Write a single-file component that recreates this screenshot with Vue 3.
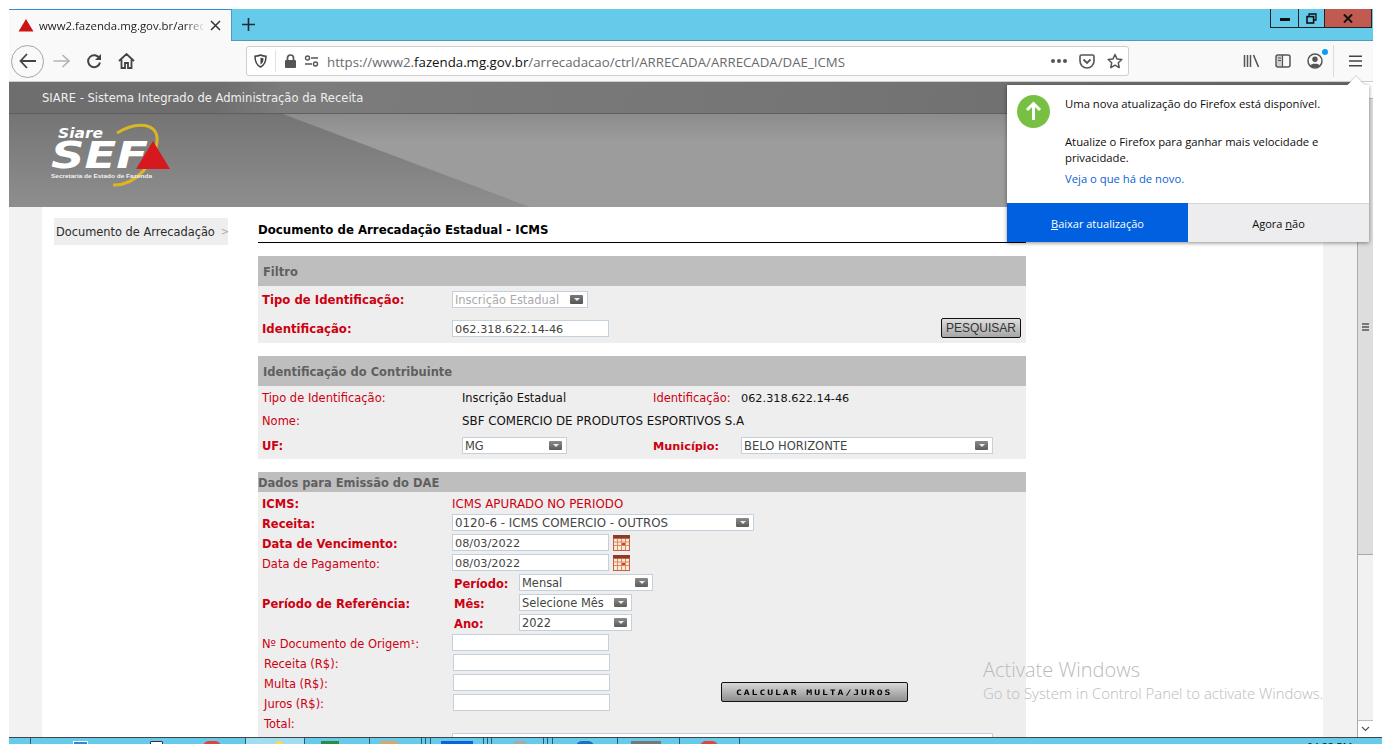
<script setup>
const taskIcons = [
  { x: 73, w: 15, c: '#2d89d6', b: '#fff', r: 0 },
  { x: 150, w: 13, c: '#fff', b: '#333', r: 1 },
  { x: 202, w: 20, c: '#e0453a', b: '#e0453a', r: 10 },
  { x: 274, w: 10, c: '#f6df4a', b: '#f6df4a', r: 5 },
  { x: 321, w: 18, c: '#2f8a43', b: '#2f8a43', r: 0 },
  { x: 380, w: 18, c: '#d8a868', b: '#d8a868', r: 2 },
  { x: 441, w: 32, c: '#0a63d8', b: '#0a63d8', r: 0 },
  { x: 514, w: 12, c: '#a8a8a8', b: '#a8a8a8', r: 0 },
  { x: 575, w: 20, c: '#1f6fc0', b: '#1f6fc0', r: 10 },
  { x: 631, w: 30, c: '#777', b: '#777', r: 0 },
  { x: 699, w: 20, c: '#e0453a', b: '#e0453a', r: 10 },
]
const taskLines = [30, 245, 304, 369, 421, 425, 430, 483, 487, 491, 543, 547, 552, 617, 679, 739]
</script>

<template>
  <div class="screen">
    <div class="window">
      <div class="tabbar">
        <div class="tab">
          <svg class="fav" width="16" height="14" viewBox="0 0 16 14"><path d="M8 1 15.500 13.500H.5Z" fill="#cc1414"/></svg>
          <span class="tab-title">www2.fazenda.mg.gov.br/arrecadacao</span>
          <svg class="tab-x" width="11" height="11" viewBox="0 0 11 11"><path d="M1 1l9 9M10 1l-9 9" stroke="#333" stroke-width="1.500"/></svg>
        </div>
        <svg class="plus" width="15" height="15" viewBox="0 0 15 15"><path d="M7.500 1v13M1 7.500h13" stroke="#1f2a33" stroke-width="1.600"/></svg>
        <div class="winbtns">
          <div class="wb wb-min"><i></i></div>
          <div class="wb wb-max">
            <svg width="11" height="11" viewBox="0 0 11 11"><path d="M3 3V1h7v6H8" fill="none" stroke="#111" stroke-width="1.300"/><rect x="1" y="3.600" width="6.600" height="6.400" fill="none" stroke="#111" stroke-width="1.600"/></svg>
          </div>
          <div class="wb wb-close">
            <svg width="10" height="9" viewBox="0 0 10 9"><path d="M1 .5l8 8M9 .5l-8 8" stroke="#111" stroke-width="2"/></svg>
          </div>
        </div>
      </div>

      <div class="toolbar">
        <div class="navs">
          <div class="back">
            <svg width="18" height="16" viewBox="0 0 18 16"><path d="M8 1 1.500 8 8 15M2 8h15" fill="none" stroke="#444" stroke-width="1.800"/></svg>
          </div>
          <svg class="fwd" width="17" height="14" viewBox="0 0 17 14"><path d="M9.500 1 16 7l-6.500 6M15.500 7H0.500" fill="none" stroke="#b4b4b6" stroke-width="1.700"/></svg>
          <svg class="reload" width="16" height="16" viewBox="0 0 16 16"><path d="M13.500 5.500A6 6 0 1 0 14 9.500" fill="none" stroke="#444" stroke-width="2"/><path d="M15 1v6H9Z" fill="#444"/></svg>
          <svg class="home" width="17" height="16" viewBox="0 0 17 16"><path d="M1 8 8.500 1 16 8M3.500 6.500V15h3.500v-5h3v5h3.500V6.500" fill="none" stroke="#444" stroke-width="1.800"/></svg>
        </div>
        <div class="urlbar">
          <svg class="shield" width="13" height="14" viewBox="0 0 13 14"><path d="M6.500 1C4.500 2 3 2.200 1 2.200 1 8 2.500 11 6.500 13 10.500 11 12 8 12 2.200 10 2.200 8.500 2 6.500 1Z" fill="none" stroke="#444" stroke-width="1.500"/><path d="M6.500 3.500v7C8.500 9.500 9.500 8 9.500 4.300 8.400 4.300 7.500 4 6.500 3.500Z" fill="#444"/></svg>
          <span class="sep"></span>
          <svg class="lock" width="13" height="14" viewBox="0 0 13 14"><path d="M3.500 6V4a3 3 0 0 1 6 0v2" fill="none" stroke="#555" stroke-width="1.700"/><rect x="1" y="6" width="11" height="8" rx="1" fill="#555"/></svg>
          <svg class="perm" width="15" height="12" viewBox="0 0 15 12"><circle cx="3.500" cy="3" r="2" fill="none" stroke="#555" stroke-width="1.400"/><path d="M7 3h7M1 9h7" stroke="#555" stroke-width="1.600"/><circle cx="11.500" cy="9" r="2" fill="none" stroke="#555" stroke-width="1.400"/></svg>
          <span class="url">https://www2.<b>fazenda.mg.gov.br</b>/arrecadacao/ctrl/ARRECADA/ARRECADA/DAE_ICMS</span>
          <span class="dots"><i></i><i></i><i></i></span>
          <svg class="pocket" width="16" height="15" viewBox="0 0 16 15"><path d="M1 2.500A1.500 1.500 0 0 1 2.500 1h11A1.500 1.500 0 0 1 15 2.500V7a7 7 0 0 1-14 0Z" fill="none" stroke="#555" stroke-width="1.600"/><path d="M4.500 5.500 8 9l3.500-3.500" fill="none" stroke="#555" stroke-width="1.800"/></svg>
          <svg class="star" width="16" height="16" viewBox="0 0 16 16"><path d="M8 1.500l2 4.400 4.800.6-3.500 3.300.9 4.800L8 12.200l-4.200 2.400.9-4.800L1.200 6.500 6 5.900Z" fill="none" stroke="#555" stroke-width="1.500" stroke-linejoin="round"/></svg>
        </div>
        <div class="tools">
          <svg width="17" height="14" viewBox="0 0 17 14"><path d="M1.500 1v12M4.500 1v12M7.500 1v12" stroke="#555" stroke-width="1.500"/><path d="M10.500 1l5 12" stroke="#555" stroke-width="1.600"/></svg>
          <svg class="t-side" width="16" height="14" viewBox="0 0 16 14"><rect x="1" y="1" width="14" height="12" rx="2" fill="none" stroke="#555" stroke-width="1.500"/><rect x="2" y="2" width="5" height="10" fill="#555" opacity=".25"/><path d="M7.500 1v12M3 4h3M3 6.500h3" stroke="#555" stroke-width="1.200"/></svg>
          <div class="acct">
            <svg width="16" height="16" viewBox="0 0 16 16"><circle cx="8" cy="8" r="7" fill="none" stroke="#555" stroke-width="1.500"/><circle cx="8" cy="6.300" r="2.700" fill="#555"/><path d="M3 12.500C4.500 10 11.500 10 13 12.500 11 15 5 15 3 12.500Z" fill="#555"/></svg>
            <i></i>
          </div>
          <span class="t-sep"></span>
          <svg class="burger" width="13" height="12" viewBox="0 0 13 12"><path d="M0 1.200h13M0 6h13M0 10.800h13" stroke="#444" stroke-width="1.600"/></svg>
        </div>
      </div>

      <div class="viewport">
        <div class="page">
          <header class="hero">
            <div class="hero-band"></div>
            <div class="hero-title">SIARE - Sistema Integrado de Administração da Receita</div>
            <svg class="logo" width="122" height="66" viewBox="0 0 122 66">
              <path d="M66 9C85 -3 108 -2 106 18 104 38 85 62 62 61" fill="none" stroke="#dcb524" stroke-width="3"/>
              <text x="7" y="13.500" class="lg-siare" textLength="45" lengthAdjust="spacingAndGlyphs">Siare</text>
              <text x="0" y="44" class="lg-sef" textLength="97" lengthAdjust="spacingAndGlyphs">SEF</text>
              <path d="M102 17 119 45H85Z" fill="#d8181f"/>
              <text x="0" y="54" class="lg-sub" textLength="101" lengthAdjust="spacingAndGlyphs">Secretaria de Estado de Fazenda</text>
            </svg>
          </header>

          <div class="sheet">
            <aside class="side">
              <div class="side-item"><span>Documento de Arrecadação</span><em>&gt;</em></div>
            </aside>
            <main class="main">
              <h1 class="title">Documento de Arrecadação Estadual - ICMS</h1>

              <section class="panel p-filter">
                <h2>Filtro</h2>
                <div class="body">
                  <div class="row r1"><label class="b">Tipo de Identificação:</label><div class="sel dis w136"><span>Inscrição Estadual</span><i></i></div></div>
                  <div class="row r2"><label class="b">Identificação:</label><div class="inp">062.318.622.14-46</div><button class="pesq">PESQUISAR</button></div>
                </div>
              </section>

              <section class="panel p-contrib">
                <h2>Identificação do Contribuinte</h2>
                <div class="body">
                  <div class="row c1"><label>Tipo de Identificação:</label><span class="val v191">Inscrição Estadual</span><label class="l88">Identificação:</label><span class="val num">062.318.622.14-46</span></div>
                  <div class="row c2"><label>Nome:</label><span class="val up">SBF COMERCIO DE PRODUTOS ESPORTIVOS S.A</span></div>
                  <div class="row c3"><label class="b">UF:</label><div class="sel w105"><span>MG</span><i></i></div><label class="b l88 mun">Município:</label><div class="sel w252"><span class="up2">BELO HORIZONTE</span><i></i></div></div>
                </div>
              </section>

              <section class="panel p-dados">
                <h2>Dados para Emissão do DAE</h2>
                <div class="body">
                  <div class="drow"><label class="b">ICMS:</label><span class="red up">ICMS APURADO NO PERIODO</span></div>
                  <div class="drow"><label class="b">Receita:</label><div class="sel w302"><span class="up">0120-6 - ICMS COMERCIO - OUTROS</span><i></i></div></div>
                  <div class="drow"><label class="b">Data de Vencimento:</label><div class="inp">08/03/2022</div><svg class="cal" width="17" height="16" viewBox="0 0 17 16"><rect x="0" y="0" width="17" height="4" fill="#8a3a2c"/><rect x=".5" y="3.500" width="16" height="12" fill="#f8e8d8" stroke="#c9603c"/><path d="M1 7h15M1 10.500h15M4.500 4v11M8.500 4v11M12.500 4v11" stroke="#d98a66"/><rect x="9" y="8" width="3" height="2" fill="#d3402a"/></svg></div>
                  <div class="drow"><label>Data de Pagamento:</label><div class="inp">08/03/2022</div><svg class="cal" width="17" height="16" viewBox="0 0 17 16"><rect x="0" y="0" width="17" height="4" fill="#8a3a2c"/><rect x=".5" y="3.500" width="16" height="12" fill="#f8e8d8" stroke="#c9603c"/><path d="M1 7h15M1 10.500h15M4.500 4v11M8.500 4v11M12.500 4v11" stroke="#d98a66"/><rect x="9" y="8" width="3" height="2" fill="#d3402a"/></svg></div>
                  <div class="period">
                    <label class="b">Período de Referência:</label>
                    <div class="sub">
                      <div class="srow"><label class="b">Período:</label><div class="sel w134"><span>Mensal</span><i></i></div></div>
                      <div class="srow"><label class="b">Mês:</label><div class="sel w113"><span>Selecione Mês</span><i></i></div></div>
                      <div class="srow"><label class="b">Ano:</label><div class="sel w113"><span>2022</span><i></i></div></div>
                    </div>
                  </div>
                  <div class="drow"><label>Nº Documento de Origem¹:</label><div class="inp"></div></div>
                  <div class="calc-wrap">
                    <div class="drow ind"><label>Receita (R$):</label><div class="inp"></div></div>
                    <div class="drow ind"><label>Multa (R$):</label><div class="inp"></div></div>
                    <div class="drow ind"><label>Juros (R$):</label><div class="inp"></div></div>
                    <button class="calc"><span>CALCULAR MULTA/JUROS</span></button>
                  </div>
                  <div class="drow ind"><label>Total:</label></div>
                  <div class="last-box"></div>
                </div>
              </section>
            </main>
          </div>
        </div>
        <div class="scrollbar">
          <div class="sb-btn sb-up"></div>
          <div class="sb-track">
            <div class="sb-thumb"><i></i><i></i><i></i></div>
          </div>
          <div class="sb-btn"><svg width="9" height="6" viewBox="0 0 9 6"><path d="M1 1l3.500 3.500L8 1" fill="none" stroke="#555" stroke-width="1.200"/></svg></div>
        </div>

        <div class="activate">
          <div class="a1">Activate Windows</div>
          <div class="a2">Go to System in Control Panel to activate Windows.</div>
        </div>
      </div>

      <div class="popup">
        <span class="pop-arrow"></span>
        <div class="pop-body">
          <svg class="pop-ic" width="33" height="33" viewBox="0 0 33 33"><circle cx="16.500" cy="16.500" r="16.500" fill="#77c043"/><path d="M16.500 25V9M10 15l6.500-6.500L23 15" fill="none" stroke="#fff" stroke-width="3"/></svg>
          <div class="pop-text">
            <p class="p1">Uma nova atualização do Firefox está disponível.</p>
            <p class="p2">Atualize o Firefox para ganhar mais velocidade e privacidade.</p>
            <p class="p3">Veja o que há de novo.</p>
          </div>
        </div>
        <div class="pop-btns">
          <div class="pb primary"><span><u>B</u>aixar atualização</span></div>
          <div class="pb second"><span>Agora <u>n</u>ão</span></div>
        </div>
      </div>
    </div>

    <div class="taskbar">
      <span class="tb-active"></span>
      <span v-for="l in taskLines" :key="l" class="tb-line" :style="{ left: l + 'px' }"></span>
      <span v-for="t in taskIcons" :key="t.x" class="tb-ic" :style="{ left: t.x + 'px', width: t.w + 'px', background: t.c, borderColor: t.b, borderRadius: t.r + 'px' }"></span>
      <span class="clock">04:22 PM</span>
    </div>
  </div>
</template>

<style>
html, body { margin: 0; overflow: hidden; background: #fff; }
</style>

<style scoped>
.screen { width: 1382px; height: 744px; overflow: hidden; position: relative; background: #fff; display: flex; flex-direction: column; padding: 9px 9px 0 9px; box-sizing: border-box; font-family: "DejaVu Sans", Verdana, sans-serif; }
.window { width: 1364px; height: 728px; position: relative; display: flex; flex-direction: column; flex: none; }

/* tabs */
.tabbar { height: 32px; background: #66cbea; display: flex; align-items: center; position: relative; border-bottom: 1px solid #4a9db8; box-sizing: border-box; flex: none; }
.tab { width: 223px; height: 32px; box-sizing: border-box; background: #f9f9fa; border-top: 1px solid #2a8fe0; border-right: 1px solid #4a9db8; display: flex; align-items: center; padding: 0 10px 0 9px; font-family: "Open Sans", sans-serif; font-size: 11.400px; color: #222; flex: none; }
.tab-title { width: 166px; margin-left: 5px; overflow: hidden; white-space: nowrap; -webkit-mask-image: linear-gradient(90deg, #000 88%, transparent); mask-image: linear-gradient(90deg, #000 88%, transparent); }
.tab-x { margin-left: 5px; }
.plus { margin-left: 9px; }
.winbtns { margin-left: auto; margin-right: 1px; display: flex; align-self: flex-start; border: 1px solid #222; border-top: none; height: 18px; }
.wb { display: flex; align-items: center; justify-content: center; height: 100%; }
.wb-min { width: 27px; border-right: 1px solid #222; }
.wb-min i { display: block; width: 10px; height: 3px; background: #111; margin-top: 3px; }
.wb-max { width: 25px; }
.wb-close { width: 46px; background: #c15a50; border-left: 1px solid #222; }

/* toolbar */
.toolbar { height: 41px; background: #f9f9fa; display: flex; align-items: center; flex: none; border-bottom: 1px solid #cfcfd0; box-sizing: border-box; }
.navs { width: 237px; display: flex; align-items: center; flex: none; padding-left: 2px; box-sizing: border-box; }
.back { width: 33px; height: 33px; border: 1px solid #a5a5a5; border-radius: 50%; display: flex; align-items: center; justify-content: center; box-sizing: border-box; margin-right: 9px; }
.fwd { margin-right: 16px; }
.reload { margin-right: 16px; }
.urlbar { width: 883px; height: 30px; box-sizing: border-box; border: 1px solid #cfcfd1; border-radius: 3px; background: #fff; display: flex; align-items: center; padding-left: 7px; flex: none; }
.sep { width: 1px; height: 22px; background: #e2e2e3; margin: 0 8px; }
.perm { margin-left: 7px; }
.url { margin-left: 8px; font-family: "Open Sans", sans-serif; font-size: 13.250px; color: #6a6a6d; white-space: nowrap; width: 724px; padding-top: 1px; }
.url b { font-weight: 400; color: #111; }
.dots { display: flex; gap: 2px; width: 17px; }
.dots i { width: 4px; height: 4px; border-radius: 50%; background: #555; }
.pocket { margin-left: 11px; }
.star { margin-left: 12px; }
.tools { display: flex; align-items: center; margin-left: 114px; flex: none; position: relative; }
.t-side { margin-left: 15px; }
.acct { margin-left: 16px; position: relative; display: flex; }
.acct i { position: absolute; top: -4px; right: -5px; width: 6px; height: 6px; border-radius: 50%; background: #0a9cf5; }
.t-sep { width: 1px; height: 32px; background: #dcdcdd; margin-left: 10px; }
.burger { margin-left: 15px; }

/* page */
.viewport { flex: 1; position: relative; display: flex; overflow: hidden; min-height: 0; }
.page { width: 1348px; background: #f2f2f2; flex: none; }
.hero { height: 125px; position: relative; background: linear-gradient(180deg, #727272 0, #727272 26%, #757575 27%, #8e8e8e 100%); overflow: hidden; }
.hero::before { content: ""; position: absolute; left: 274px; top: 32px; width: 1074px; height: 93px; background: linear-gradient(180deg, #8c8c8c 0, #9c9c9c 30%, #9c9c9c 100%); clip-path: polygon(0 0, 100% 0, 100% 100%, 23% 100%); }
.hero-band { position: absolute; left: 0; top: 0; right: 0; height: 32px; box-sizing: border-box; border-bottom: 1px solid #5f5f5f; background: linear-gradient(100deg, #6e6e6e 0, #6e6e6e 15.500%, #7c7c7c 20.500%, #757575 60%, #696969 100%); }
.hero-title { position: relative; z-index: 1; padding: 9px 0 0 33px; font-size: 11.570px; line-height: 14px; color: #eee; }
.logo { position: absolute; z-index: 1; left: 42px; top: 42px; overflow: visible; }
.lg-siare { font: italic 900 14px "DejaVu Sans", sans-serif; fill: #fff; }
.lg-sef { font: italic 700 38px "DejaVu Sans", sans-serif; fill: #fff; }
.lg-sub { font: 700 6px "Liberation Sans", sans-serif; fill: #f1f1f1; }

.sheet { margin: 0 34px 0 33px; background: #fff; display: flex; height: 600px; }
.side { width: 216px; padding: 11px 0 0 12px; box-sizing: border-box; flex: none; }
.side-item { width: 174px; height: 27px; background: #eee; display: flex; align-items: center; padding-left: 2px; box-sizing: border-box; font-size: 11.400px; color: #2b2b2b; white-space: nowrap; }
.side-item em { font-style: normal; color: #aaa; margin-left: 6px; font-size: 10px; }
.main { width: 768px; padding-top: 15px; flex: none; }
.title { margin: 0 0 13px; font-size: 11.750px; line-height: 17px; height: 20px; font-weight: 700; color: #000; border-bottom: 1px solid #000; box-sizing: content-box; white-space: nowrap; }
.panel { margin-bottom: 13px; background: #eee; }
.panel h2 { margin: 0; height: 30px; line-height: 33px; padding-left: 5px; background: #bebebe; font-size: 11.500px; font-weight: 700; color: #5f5f5f; }
.body { font-size: 11.450px; color: #111; }
label { color: #cc0011; white-space: nowrap; font-size: 11.500px; }
label.b { font-weight: 700; font-size: 11.500px; }
.r1 label.b, .r2 label.b { font-size: 11.700px; }
.mun.b { font-size: 11.300px; }
.up { font-size: 11.850px; white-space: nowrap; }
.up2 { font-size: 11.560px; }
.num { font-size: 11.300px; }
.row { display: flex; align-items: center; padding-left: 4px; box-sizing: border-box; }
.row > label:first-child { width: 190px; flex: none; }
.row > label.b, .drow > label, .drow > span, .srow > label, .period > label { padding-top: 1px; }
.r1 { height: 27px; }
.r2 { height: 30px; padding-top: 1px; position: relative; }
.sel, .inp { height: 17px; box-sizing: border-box; border: 1px solid #c4d0dc; background: #fff; display: flex; align-items: center; font-size: 11.450px; color: #444; white-space: nowrap; flex: none; line-height: 15px; }
.sel { padding: 0 4px 0 2px; justify-content: space-between; }
.sel span { padding-top: 2px; }
.sel i { width: 13px; height: 9px; border-radius: 1px; flex: none; background: linear-gradient(180deg, #8a8a8a, #5c5c5c); position: relative; }
.sel i::after { content: ""; position: absolute; left: 3.500px; top: 3px; border: 3px solid transparent; border-top-color: #eee; border-bottom: 0; }
.dis span { color: #aaa; }
.dis i { background: linear-gradient(180deg, #777, #555); }
.inp { width: 157px; padding: 2px 0 0 2px; font-size: 11.300px; }
.w136 { width: 136px; }
.w105 { width: 105px; }
.w252 { width: 252px; }
.w302 { width: 302px; }
.w134 { width: 134px; }
.w113 { width: 113px; }
.pesq { position: absolute; left: 683px; top: 5px; width: 80px; height: 20px; padding: 0; box-sizing: border-box; border: 1px solid #111; border-radius: 2px; background: linear-gradient(180deg, #dedede, #a6a6a6); font: 12px "Liberation Sans", sans-serif; color: #333; }

.c1 { height: 24px; }
.c2 { height: 22px; }
.c3 { height: 27px; }
.c1 > label:first-child, .c2 > label:first-child, .c3 > label:first-child { width: 200px; }
.v191 { width: 191px; flex: none; }
.l88 { width: 88px; flex: none; }
.mun { margin-left: 86px; }

.p-dados h2 { height: 20px; line-height: 23px; padding-left: 0; }
.p-dados .body { padding-top: 1px; }
.drow { height: 20px; display: flex; align-items: center; padding-left: 4px; }
.drow > label { width: 190px; flex: none; }
.drow .sel, .drow .inp, .srow .sel { align-self: flex-start; margin-top: 1px; }
.drow.ind { padding-left: 6px; }
.drow.ind > label { width: 189px; }
.red { color: #cc0011; }
.cal { margin-left: 4px; }
.period { display: flex; align-items: center; padding-left: 4px; }
.period > label { width: 192px; flex: none; }
.srow { height: 20px; display: flex; align-items: center; }
.srow > label { width: 65px; flex: none; }
.calc-wrap { position: relative; }
.calc { position: absolute; left: 463px; top: 29px; width: 187px; height: 20px; padding: 1px 0 0; box-sizing: border-box; border: 1px solid #111; border-radius: 2px; background: linear-gradient(180deg, #d8d8d8, #8f8f8f); font: 700 7.500px "DejaVu Sans Mono", monospace; letter-spacing: 1.500px; color: #000; white-space: nowrap; }
.calc span { display: inline-block; transform: scaleX(1.3); }
.last-box { margin: 0 0 0 194px; width: 541px; height: 30px; box-sizing: border-box; border: 1px solid #c4d0dc; background: #fff; }

/* scrollbar */
.scrollbar { width: 16px; background: #f1f1f1; border-left: 1px solid #aaa; box-sizing: border-box; display: flex; flex-direction: column; flex: none; }
.sb-track { flex: 1; }
.sb-thumb { height: 456px; background: #ddd; border-bottom: 1px solid #a8a8a8; box-sizing: border-box; display: flex; flex-direction: column; align-items: center; justify-content: center; gap: 1px; }
.sb-thumb i { width: 7px; height: 2px; background: #777; }
.sb-btn { height: 17px; display: flex; align-items: center; justify-content: center; background: #fff; border-top: 1px solid #bbb; box-sizing: border-box; flex: none; }
.sb-up { border-top: none; border-bottom: 1px solid #bbb; }

.activate { position: absolute; left: 974px; top: 576px; color: #bbb; font-family: "Open Sans", sans-serif; font-weight: 300; white-space: nowrap; }
.a1 { font-size: 20px; line-height: 24px; }
.a2 { font-size: 14.900px; line-height: 20px; margin-top: 1px; }

/* popup */
.popup { position: absolute; left: 998px; top: 76px; width: 362px; height: 157px; background: #fff; box-shadow: 0 1px 4px rgba(0,0,0,.45); z-index: 5; font-family: "Open Sans", sans-serif; font-size: 11.270px; color: #0c0c0d; display: flex; flex-direction: column; }
.pop-arrow { position: absolute; top: -6px; right: 7px; width: 12px; height: 12px; background: #fff; transform: rotate(45deg); box-shadow: -1px -1px 1px rgba(0,0,0,.12); }
.pop-body { flex: 1; display: flex; padding: 10px 0 0 10px; position: relative; }
.pop-text { margin-left: 15px; width: 295px; }
.pop-text p { margin: 0; line-height: 16px; }
.p1 { padding-top: 1px; }
.pop-text .p2 { margin-top: 22px; }
.pop-text .p3 { margin-top: 5px; color: #0a63d8; }
.pop-btns { height: 39px; display: flex; flex: none; }
.pb { display: flex; align-items: center; justify-content: center; font-size: 11px; padding-top: 1px; box-sizing: border-box; }
.primary { width: 181px; background: #0060df; color: #fff; }
.second { flex: 1; background: #ededf0; border-top: 1px solid #d5d5d5; color: #0c0c0d; }

/* taskbar */
.taskbar { position: relative; height: 7px; flex: none; margin: 0 -9px 0 0; background: #66cbea; border-top: 1px solid #444; box-sizing: border-box; overflow: hidden; }
.tb-active { position: absolute; left: 236px; top: 0; width: 59px; height: 7px; background: #a0dcf2; }
.tb-line { position: absolute; top: 0; width: 1px; height: 7px; background: #2f5a6a; margin-left: -9px; }
.tb-ic { position: absolute; top: 3px; height: 14px; box-sizing: border-box; border: 1px solid; margin-left: -9px; }
.clock { position: absolute; left: 1298px; top: 2px; font: 10.500px/14px "Open Sans", sans-serif; color: #111; }
</style>
